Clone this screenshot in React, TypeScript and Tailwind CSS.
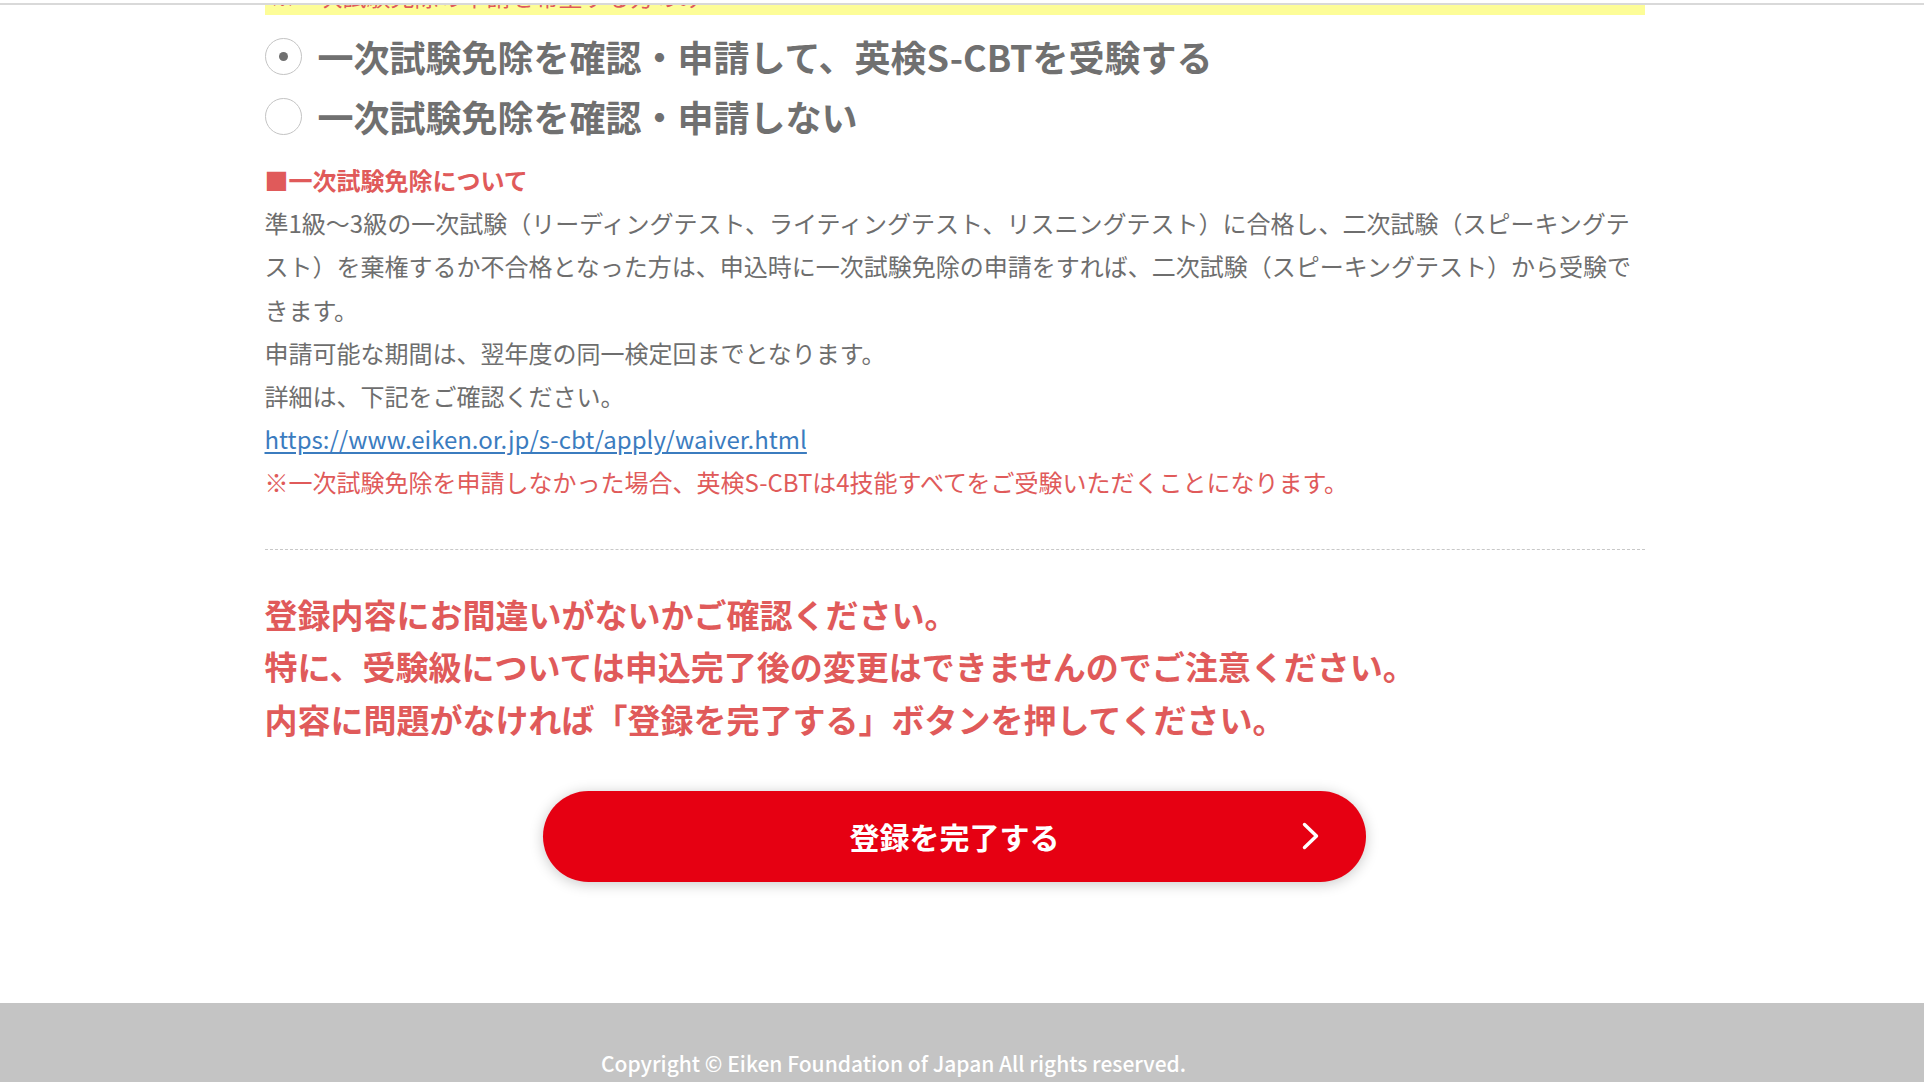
const waiverOptions = [
  { label: '一次試験免除を確認・申請して、英検S-CBTを受験する', checked: true },
  { label: '一次試験免除を確認・申請しない', checked: false },
];

function RadioRow({ label, checked }: { label: string; checked: boolean }) {
  return (
    <label className="flex items-center h-[60px] gap-4 cursor-pointer">
      <span className="w-[37px] h-[37px] rounded-full border border-[#c4c4c4] bg-white flex items-center justify-center flex-shrink-0">
        {checked && <span className="w-[9px] h-[9px] rounded-full bg-[#707070]" />}
      </span>
      <span className="text-[36px] font-bold text-[#707070] leading-none whitespace-nowrap">{label}</span>
    </label>
  );
}

export default function App() {
  return (
    <div className="min-h-screen bg-white font-['Noto_Sans_CJK_JP','Noto_Sans',sans-serif] overflow-hidden">
      <div className="pt-[3px]">
        <div className="h-[2px] bg-[#d9d9d9]" />
      </div>

      <div className="w-[1909px]">
        <div className="w-[1380px] mx-auto">
          {/* notice box, mostly scrolled out of view */}
          <div className="h-[10px] overflow-hidden bg-[#fdfd98] flex flex-col justify-end">
            <p className="px-[6px] pb-[7px] text-[24px] leading-none text-[#e05a5a] whitespace-nowrap">
              ※一次試験免除の申請を希望する方のみ
            </p>
          </div>

          {/* Radio options */}
          <div className="mt-[11px]">
            {waiverOptions.map((opt) => (
              <RadioRow key={opt.label} label={opt.label} checked={opt.checked} />
            ))}
          </div>

          {/* About the waiver */}
          <div className="mt-[12px] text-[24px] leading-[1.8] text-[#6e6e6e]">
            <h3 className="font-bold text-[#e05a5a]">■一次試験免除について</h3>
            <p>
              準1級～3級の一次試験（リーディングテスト、ライティングテスト、リスニングテスト）に合格し、二次試験（スピーキングテスト）を棄権するか不合格となった方は、申込時に一次試験免除の申請をすれば、二次試験（スピーキングテスト）から受験できます。
            </p>
            <p>申請可能な期間は、翌年度の同一検定回までとなります。</p>
            <p>詳細は、下記をご確認ください。</p>
            <p>
              <a href="#" className="text-[#3b7cbf] underline underline-offset-[3px]">
                https://www.eiken.or.jp/s-cbt/apply/waiver.html
              </a>
            </p>
            <p className="text-[#e05a5a]">
              ※一次試験免除を申請しなかった場合、英検S-CBTは4技能すべてをご受験いただくことになります。
            </p>
          </div>

          <div className="mt-[45px] border-t border-dashed border-[#c8c8c8]" />

          {/* Confirmation message */}
          <div className="mt-[38px] text-[33px] leading-[1.6] font-bold text-[#e05a5a]">
            <p>登録内容にお間違いがないかご確認ください。</p>
            <p>特に、受験級については申込完了後の変更はできませんのでご注意ください。</p>
            <p>内容に問題がなければ「登録を完了する」ボタンを押してください。</p>
          </div>

          <div className="mt-[45px] flex justify-center">
            <button className="relative w-[823px] h-[91px] rounded-full bg-[#e60012] text-white shadow-[0_2px_14px_rgba(0,0,0,0.22)] flex items-center justify-center">
              <span className="text-[30px] font-bold leading-none">登録を完了する</span>
              <svg
                className="absolute right-[47px] top-1/2 -translate-y-1/2 w-[17px] h-[28px]"
                viewBox="0 0 17 28"
                fill="none"
                stroke="currentColor"
                strokeWidth={3.4}
                strokeLinecap="round"
                strokeLinejoin="round"
              >
                <polyline points="2.5,2.5 14.5,14 2.5,25.5" />
              </svg>
            </button>
          </div>
        </div>
      </div>

      <footer className="mt-[121px] h-[81px] bg-[#c4c4c4] pt-[45px] pl-[601px]">
        <p className="text-[21px] leading-[30px] font-medium text-white whitespace-nowrap">
          Copyright © Eiken Foundation of Japan All rights reserved.
        </p>
      </footer>
    </div>
  );
}
